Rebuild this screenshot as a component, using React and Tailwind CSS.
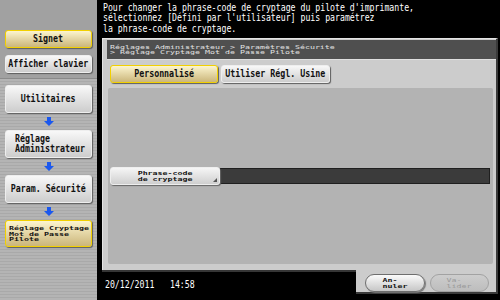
import React from "react";
import clsx from "clsx";

const mono = "font-['DejaVu_Sans_Mono','Liberation_Mono',monospace]";

// bouton du panneau latéral (gris ou jaune)
const SideBtn = ({ yellow, className, children }) => (
  <div
    className={clsx(
      "rounded-[3px] flex items-center shadow-[1px_1px_1px_#5e5e5e]",
      yellow
        ? "border-[1.5px] border-[#f2d000] bg-linear-to-b from-[#fcf5cf] to-[#cbb67a]"
        : "border border-[#eeeeee] bg-linear-to-b from-[#f8f8f8] to-[#cdcdcd]",
      className
    )}
  >
    {children}
  </div>
);

const Label = ({ children }) => (
  <div className="flex-1 min-w-0 flex justify-center">
    <span className={clsx(mono, "inline-block shrink-0 whitespace-nowrap text-[10px] leading-[10px] font-bold text-[#111] scale-x-[0.83]")}>
      {children}
    </span>
  </div>
);

const Arrow = () => (
  <div className="h-[17px] flex items-center justify-center">
    <svg width="10" height="9" viewBox="0 0 10 9">
      <path d="M3 0h4v4h3L5 9 0 4h3z" fill="#1b58ee" />
    </svg>
  </div>
);

const App = () => {
  return (
    <div className="w-[500px] h-[300px] flex bg-black overflow-hidden">
      {/* Panneau latéral */}
      <div className="w-[97px] flex flex-col">
        <div className="h-[79px] bg-[#a1a1a1] border-b border-[#8a8a8a] pt-[30px] px-[5px] flex flex-col gap-[7px]">
          <SideBtn yellow className="h-[18px]">
            <Label>Signet</Label>
          </SideBtn>
          <SideBtn className="h-[18px]">
            <Label>Afficher clavier</Label>
          </SideBtn>
        </div>
        <div className="flex-1 px-[5px] pt-[6px] flex flex-col bg-[repeating-linear-gradient(180deg,#b4b4b4_0px,#b4b4b4_2px,#a9a9a9_2px,#a9a9a9_3px)]">
          <SideBtn className="h-[28px]">
            <Label>Utilitaires</Label>
          </SideBtn>
          <Arrow />
          <SideBtn className="h-[28px] pl-[9px]">
            <span className={clsx(mono, "inline-block origin-left whitespace-nowrap text-[10px] leading-[10px] font-bold text-[#111] scale-x-[0.83]")}>
              Réglage
              <br />
              Administrateur
            </span>
          </SideBtn>
          <Arrow />
          <SideBtn className="h-[28px]">
            <Label>Param. Sécurité</Label>
          </SideBtn>
          <Arrow />
          <SideBtn yellow className="h-[27px] pl-[3px]">
            <span className={clsx(mono, "inline-block origin-left whitespace-nowrap text-[10px] leading-[8.5px] font-bold text-[#111] scale-x-[0.83] scale-y-[0.6]")}>
              Réglage Cryptage
              <br />
              Mot de Passe
              <br />
              Pilote
            </span>
          </SideBtn>
        </div>
      </div>

      {/* Zone principale */}
      <div className="flex-1 flex flex-col">
        <div className="h-[38px] pl-[6px] pt-[3px]">
          <div className={clsx(mono, "origin-top-left whitespace-nowrap text-[10px] leading-[10.3px] text-white scale-x-[0.82]")}>
            Pour changer la phrase-code de cryptage du pilote d'imprimante,
            <br />
            sélectionnez [Défini par l'utilisateur] puis paramétrez
            <br />
            la phrase-code de cryptage.
          </div>
        </div>

        <div className="ml-[5px] mr-[2px] h-[232px] bg-[#cccccc] border-l border-t border-[#e4e4e4] border-r-2 border-r-[#3a3a3a] pl-[4px] flex flex-col">
          <div className="mt-[1px] h-[20px] bg-[#4f4f4f] border-b border-[#dedede] pl-[3px] flex items-center">
            <span className={clsx(mono, "inline-block origin-left whitespace-nowrap text-[10px] leading-[8.5px] text-[#e2e2e2] scale-x-[0.83] scale-y-[0.6]")}>
              Réglages Administrateur &gt; Paramètres Sécurite
              <br />
              &gt; Réglage Cryptage Mot de Passe Pilote
            </span>
          </div>

          <div className="mt-[5px] h-[18px] pl-[3px] flex gap-[3px]">
            <SideBtn yellow className="w-[108px]">
              <Label>Personnalisé</Label>
            </SideBtn>
            <SideBtn className="w-[109px]">
              <Label>Utiliser Régl. Usine</Label>
            </SideBtn>
          </div>

          <div className="mt-[5px] ml-[1px] mr-[3px] h-[176px] bg-[#b3b3b3] rounded-[2px] pt-[79px] pl-[2px] pr-[3px]">
            <div className="flex h-[18px]">
              <div className="relative w-[110px] rounded-[3px] border border-[#eeeeee] bg-linear-to-b from-[#f6f6f6] to-[#cfcfcf] shadow-[1px_1px_1px_#666] flex items-center justify-center">
                <span className={clsx(mono, "inline-block whitespace-nowrap text-[10px] leading-[10px] font-bold text-[#111] scale-x-[0.83] scale-y-[0.6]")}>
                  Phrase-code
                  <br />
                  de cryptage
                </span>
                <svg className="absolute right-[2px] bottom-[2px]" width="4" height="4" viewBox="0 0 4 4">
                  <path d="M4 0v4H0z" fill="#555" />
                </svg>
              </div>
              <div className="flex-1 mt-[1px] h-[16px] bg-[#3b3b3b] border border-[#1f1f1f]" />
            </div>
          </div>
        </div>

        <div className="flex h-[30px]">
          <div className="flex-1 ml-[5px] border-t-2 border-[#363636] pl-[3px] pt-[8px] flex gap-[5px]">
            <span className={clsx(mono, "inline-block origin-left whitespace-nowrap text-[10px] leading-[10px] text-white scale-x-[0.82]")}>
              20/12/2011
            </span>
            <span className={clsx(mono, "inline-block origin-left whitespace-nowrap text-[10px] leading-[10px] text-white scale-x-[0.82]")}>
              14:58
            </span>
          </div>
          <div className="w-[142px] mr-[2px] h-[24px] bg-[#cccccc] border-r-2 border-b-2 border-[#3a3a3a] pl-[9px] pt-[4px] flex gap-[5px]">
            <div className="w-[60px] h-[18px] rounded-full border border-[#6e6e6e] bg-linear-to-b from-[#fbfbfb] to-[#c6c6c6] shadow-[1px_1px_1px_#777] flex items-center justify-center">
              <span className={clsx(mono, "inline-block text-left whitespace-nowrap text-[10px] leading-[10px] font-bold text-[#111] scale-x-[0.83] scale-y-[0.6]")}>
                An-
                <br />
                nuler
              </span>
            </div>
            <div className="w-[59px] h-[18px] rounded-full border border-[#a2a2a2] bg-linear-to-b from-[#cdcdcd] to-[#bdbdbd] flex items-center justify-center">
              <span className={clsx(mono, "inline-block text-left whitespace-nowrap text-[10px] leading-[10px] text-[#999] scale-x-[0.83] scale-y-[0.6]")}>
                Va-
                <br />
                lider
              </span>
            </div>
          </div>
        </div>
      </div>
    </div>
  );
};

export default App;
